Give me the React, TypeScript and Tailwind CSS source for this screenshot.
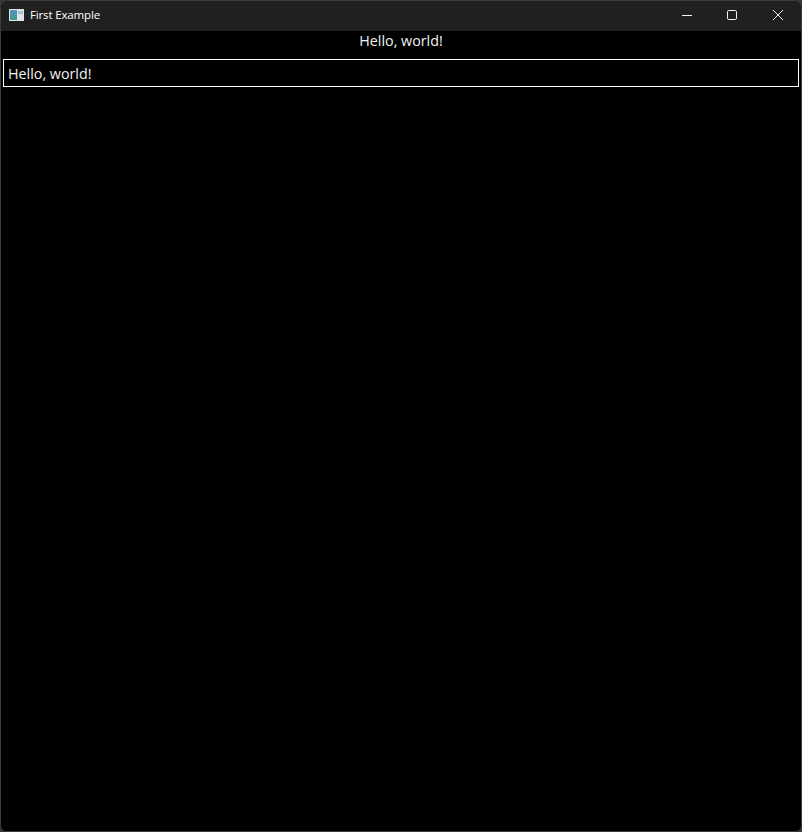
import { useState } from 'react'

function AppIcon() {
  return (
    <svg width="15" height="12" viewBox="0 0 15 12" className="shrink-0">
      <rect width="15" height="12" fill="#dfe5e8" />
      <defs>
        <linearGradient id="pane" x1="0" y1="0" x2="0" y2="1">
          <stop offset="0" stopColor="#5b93c4" />
          <stop offset="1" stopColor="#3f9a80" />
        </linearGradient>
      </defs>
      <rect x="1" y="1" width="7" height="10" fill="url(#pane)" />
      <rect x="9" y="2" width="5" height="3" fill="#9cc8cc" />
    </svg>
  )
}

function WindowButtons() {
  return (
    <div className="flex items-center self-start text-[#f2f2f2]">
      <div className="w-[46px] h-[28px] flex items-center justify-center">
        <svg width="12" height="12" viewBox="0 0 12 12">
          <path d="M2 6.5h10" stroke="currentColor" fill="none" />
        </svg>
      </div>
      <div className="w-[46px] h-[28px] flex items-center justify-center">
        <svg width="12" height="12" viewBox="0 0 12 12">
          <rect x="1.5" y="1.5" width="9" height="9" rx="1.2" stroke="currentColor" fill="none" />
        </svg>
      </div>
      <div className="w-[46px] h-[28px] flex items-center justify-center">
        <svg width="12" height="12" viewBox="0 0 12 12">
          <path d="M1 1l10 10M11 1L1 11" stroke="currentColor" fill="none" />
        </svg>
      </div>
    </div>
  )
}

export default function App() {
  const [text, setText] = useState('Hello, world!')

  return (
    <div className="w-[802px] h-[832px] bg-[#3a3733] overflow-hidden font-['Open_Sans','Noto_Sans',sans-serif]">
      <div className="h-full rounded-t-lg rounded-b-md border border-[#3c3c3c] bg-black overflow-hidden flex flex-col">
        <div className="h-[30px] shrink-0 bg-[#202020] flex items-center justify-between pl-2">
          <div className="flex items-center gap-[6px] pb-[2px]">
            <AppIcon />
            <span className="text-[11.5px] tracking-[-0.15px] text-white">First Example</span>
          </div>
          <WindowButtons />
        </div>
        <div className="flex-1 flex flex-col px-[2px]">
          <div className="h-[19px] flex items-center justify-center text-[14.3px] text-[#f0f0f0]">
            {text}
          </div>
          <input
            value={text}
            onChange={e => setText(e.target.value)}
            className="mt-[9px] h-[28px] w-full border border-white bg-black px-1 text-[14.3px] text-[#f0f0f0] outline-none"
          />
        </div>
      </div>
    </div>
  )
}
